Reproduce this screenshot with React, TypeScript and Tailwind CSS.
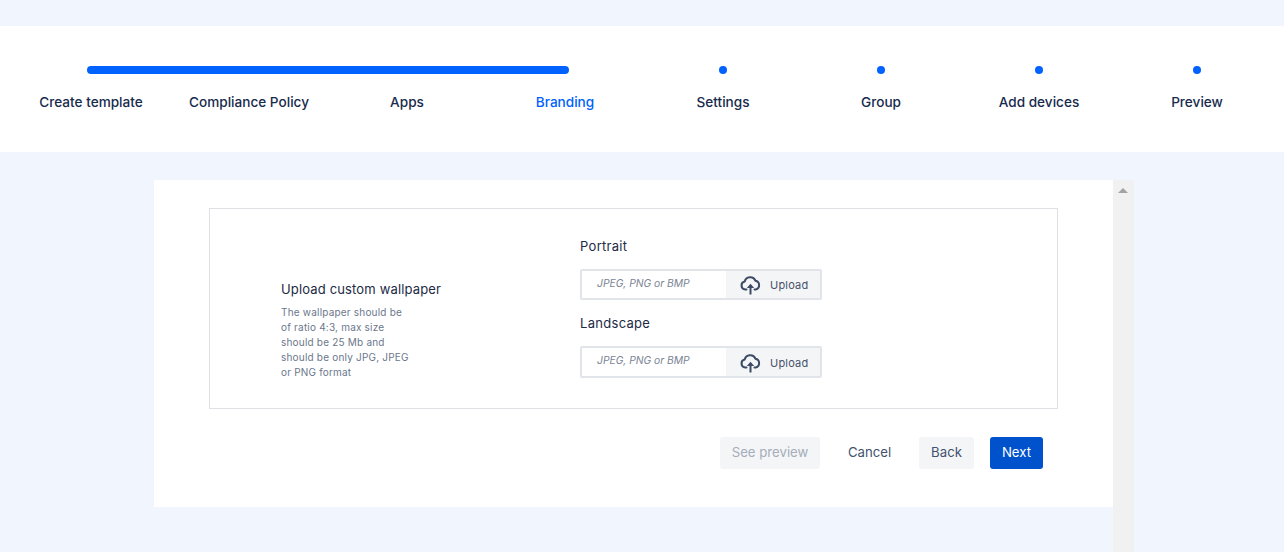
const steps = [
  { label: "Create template" },
  { label: "Compliance Policy" },
  { label: "Apps" },
  { label: "Branding", active: true },
  { label: "Settings" },
  { label: "Group" },
  { label: "Add devices" },
  { label: "Preview" },
];

const font = "font-['Inter','Noto_Sans',sans-serif]";

function CloudUpload() {
  return (
    <svg width="21" height="20" viewBox="0 0 21 20" fill="none" className="text-[#3d4a63]">
      <path
        d="M6.5 14.5H5.2a4 4 0 0 1-.5-7.9A5.6 5.6 0 0 1 15.4 5.7a4.5 4.5 0 0 1 .3 8.8h-1.2"
        stroke="currentColor"
        strokeWidth="2"
        strokeLinecap="round"
        strokeLinejoin="round"
      />
      <path d="M10.5 19.5V10" stroke="currentColor" strokeWidth="2" />
      <path d="M6.8 13 10.5 8.8l3.7 4.2z" fill="currentColor" />
    </svg>
  );
}

function UploadField({ label, tall }: { label: string; tall?: boolean }) {
  return (
    <div>
      <p className="mb-[13px] text-[13px] leading-5 text-[#1c2a45] tracking-[0.3px]">{label}</p>
      <div className={`flex ${tall ? "h-[32px]" : "h-[31px]"} w-[242px] border-2 border-[#e1e4e9] rounded-[2px] bg-white`}>
        <div className="flex-1 pl-[15px] pt-[1px] text-[10.3px] leading-[23px] italic text-[#7b8494]">
          JPEG, PNG or BMP
        </div>
        <div
          className={`flex w-[94px] items-center bg-[#f4f5f7] pl-[14px] ${
            tall ? "pt-[2px]" : "pt-[1px]"
          } text-[11px] text-[#46526a] tracking-[0.2px]`}
        >
          <CloudUpload />
          <span className="ml-[9px]">Upload</span>
        </div>
      </div>
    </div>
  );
}

export default function App() {
  return (
    <div className={`h-[552px] overflow-hidden bg-[#f1f5fe] pt-[26px] ${font}`}>
      {/* Stepper */}
      <div className="h-[126px] bg-white pl-[12px] pr-[8px] pt-[40px]">
        <div className="grid grid-cols-8 h-[8px] items-center">
          <div className="col-span-4 mx-[75px] h-[8px] rounded-full bg-[#0062ff]" />
          {steps.slice(4).map((s) => (
            <div key={s.label} className="flex justify-center">
              <div className="h-[8px] w-[8px] rounded-full bg-[#0062ff]" />
            </div>
          ))}
        </div>
        <div className="mt-[18px] grid grid-cols-8">
          {steps.map((s) => (
            <div
              key={s.label}
              className={`text-center text-[13.6px] leading-5 font-medium whitespace-nowrap ${
                s.active ? "text-[#0062ff]" : "text-[#172b4d]"
              }`}
            >
              {s.label}
            </div>
          ))}
        </div>
      </div>

      {/* Panel */}
      <div className="mt-[28px] ml-[154px] flex h-[372px] w-[980px]">
        <div className="h-[327px] w-[959px] bg-white pl-[55px] pt-[28px]">
          <div className="flex h-[201px] w-[849px] border border-[#dfe0e3]">
            <div className="w-[370px] pl-[71px] pt-[70px]">
              <p className="text-[13px] leading-5 text-[#1c2a45] tracking-[0.15px]">Upload custom wallpaper</p>
              <p className="mt-[6px] whitespace-nowrap text-[10px] leading-[15px] text-[#6b778c] tracking-[0.2px]">
                The wallpaper should be
                <br />
                of ratio 4:3, max size
                <br />
                should be 25 Mb and
                <br />
                should be only JPG, JPEG
                <br />
                or PNG format
              </p>
            </div>
            <div className="flex flex-col gap-[13px] pt-[27px]">
              <UploadField label="Portrait" />
              <UploadField label="Landscape" tall />
            </div>
          </div>

          <div className="mt-[28px] flex w-[834px] justify-end text-[13.2px]">
            <button className="h-[32px] w-[100px] rounded-[3px] bg-[#f4f5f7] text-[#a5adba]">See preview</button>
            <button className="ml-[14px] h-[32px] w-[71px] text-[#42526e]">Cancel</button>
            <button className="ml-[14px] h-[32px] w-[55px] rounded-[3px] bg-[#f4f5f7] text-[#42526e]">Back</button>
            <button className="ml-[16px] h-[32px] w-[53px] rounded-[3px] bg-[#0052cc] text-white">Next</button>
          </div>
        </div>

        {/* Scrollbar */}
        <div className="flex w-[21px] justify-center bg-[#f1f1f1] pt-[8px] pr-[1px]">
          <div className="h-0 w-0 border-x-[5px] border-b-[5px] border-x-transparent border-b-[#a3a3a3]" />
        </div>
      </div>
    </div>
  );
}
